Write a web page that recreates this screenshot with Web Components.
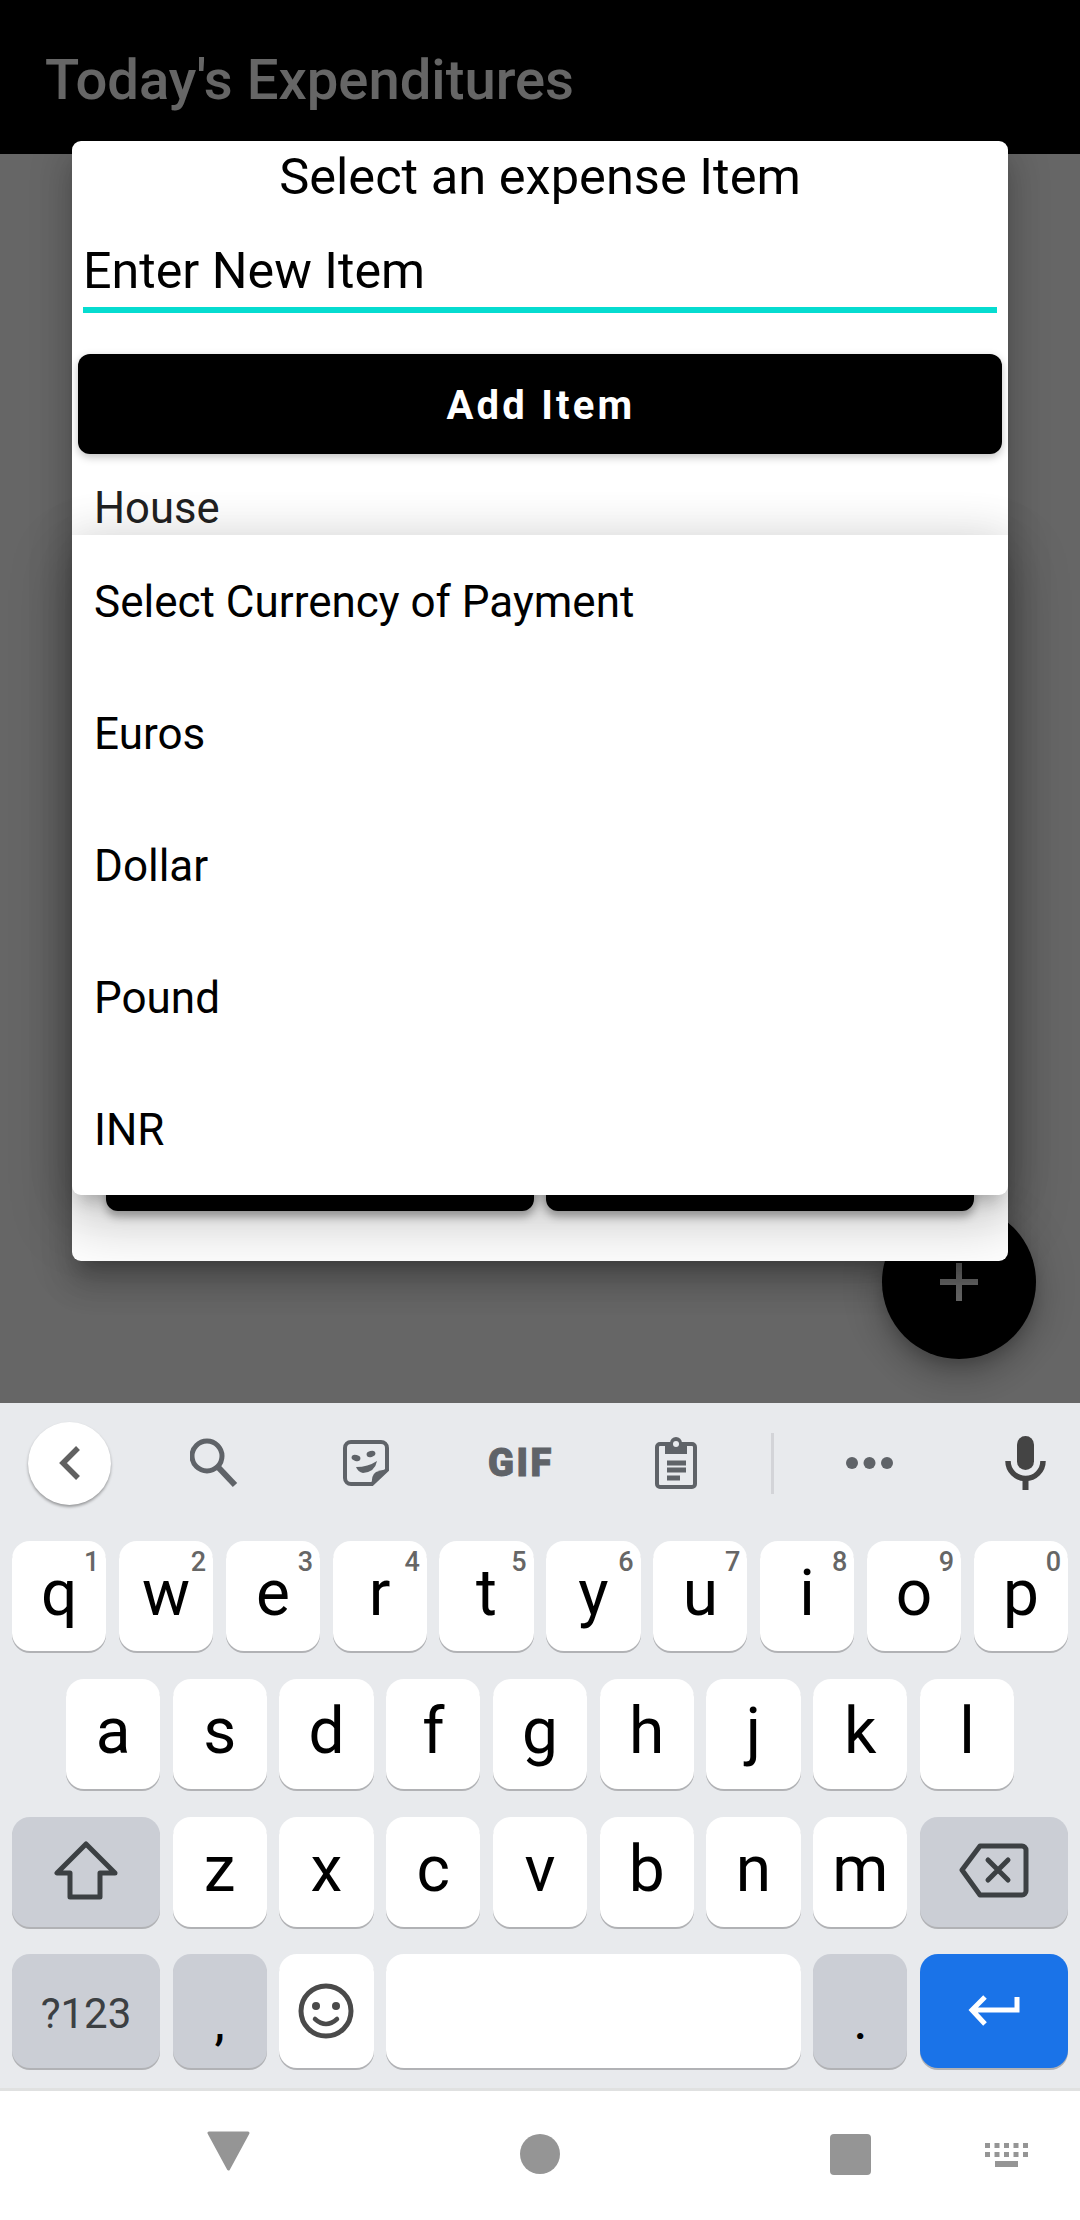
<!DOCTYPE html>
<html>
<head>
<meta charset="utf-8">
<title>Today's Expenditures</title>
<style>
  html, body { margin: 0; padding: 0; width: 1080px; height: 2220px; overflow: hidden; background: #fff; font-family: Roboto, "Liberation Sans", sans-serif; }
</style>
</head>
<body>
<phone-screen>
  <app-header>Today's Expenditures</app-header>
  <fab-button slot="fab"></fab-button>
  <expense-dialog slot="dialog" heading="Select an expense Item" placeholder="Enter New Item" action="Add Item" first="House"></expense-dialog>
  <currency-menu slot="menu">
    <menu-row>Select Currency of Payment</menu-row>
    <menu-row>Euros</menu-row>
    <menu-row>Dollar</menu-row>
    <menu-row>Pound</menu-row>
    <menu-row>INR</menu-row>
  </currency-menu>
  <soft-keyboard slot="keyboard"></soft-keyboard>
  <nav-bar slot="nav"></nav-bar>
</phone-screen>

<script>
class PhoneScreen extends HTMLElement {
  constructor() {
    super();
    this.attachShadow({ mode: 'open' });
    this.shadowRoot.innerHTML = `
      <style>
        :host { display: flex; flex-direction: column; width: 1080px; height: 2220px; }
        .stage { position: relative; height: 1403px; background: #fff; overflow: hidden; }
        .scrim { position: absolute; inset: 0; background: rgba(0,0,0,.6); }
      </style>
      <div class="stage">
        <slot></slot>
        <slot name="fab"></slot>
        <div class="scrim"></div>
        <slot name="dialog"></slot>
        <slot name="menu"></slot>
      </div>
      <slot name="keyboard"></slot>
      <slot name="nav"></slot>
    `;
  }
}

class AppHeader extends HTMLElement {
  constructor() {
    super();
    this.attachShadow({ mode: 'open' });
    this.shadowRoot.innerHTML = `
      <style>
        :host { display: flex; align-items: center; height: 154px; padding: 6px 0 0 45px; box-sizing: border-box; background: #000; color: #fff; font: 500 56.2px Roboto, sans-serif; }
      </style>
      <slot></slot>
    `;
  }
}

class FabButton extends HTMLElement {
  constructor() {
    super();
    this.attachShadow({ mode: 'open' });
    this.shadowRoot.innerHTML = `
      <style>
        :host { position: absolute; left: 882px; top: 1205px; width: 154px; height: 154px; border-radius: 50%; background: #000; display: flex; align-items: center; justify-content: center;
          box-shadow: 0 9px 15px -3px rgba(0,0,0,.2), 0 18px 30px 3px rgba(0,0,0,.14), 0 3px 54px 3px rgba(0,0,0,.12); }
      </style>
      <svg width="38" height="38" viewBox="0 0 38 38"><path d="M19 0V38M0 19H38" stroke="#fff" stroke-width="6"/></svg>
    `;
  }
}

class ExpenseDialog extends HTMLElement {
  constructor() {
    super();
    this.attachShadow({ mode: 'open' });
    this.shadowRoot.innerHTML = `
      <style>
        :host { position: absolute; left: 72px; top: 141px; width: 936px; height: 1120px; box-sizing: border-box; background: #fff; border-radius: 9px; display: flex; flex-direction: column;
          box-shadow: 0 15px 15px -9px rgba(0,0,0,.2), 0 24px 30px 3px rgba(0,0,0,.14), 0 9px 42px 6px rgba(0,0,0,.12);
          color: #000; font-family: Roboto, sans-serif; }
        h2 { margin: 0; font: 400 50.6px/72px Roboto, sans-serif; text-align: center; height: 70px; }
        .field { margin: 18px 11px 0 11px; height: 78px; border-bottom: 6px solid #06dcd0; font-size: 50.2px; line-height: 84px; }
        button { display: block; margin: 41px 6px 0 6px; height: 100px; width: 924px; border: 0; border-radius: 12px; background: #000; color: #fff; font: 700 40px Roboto, sans-serif; letter-spacing: 3.2px;
          box-shadow: 0 3px 9px rgba(0,0,0,.25); padding: 2px 0 0 2px; }
        .list { flex: 1; overflow: hidden; padding: 30px 22px 0; font-size: 43.6px; line-height: 50px; color: #212121; }
        .foot { display: flex; gap: 12px; padding: 0 34px 50px; }
        .foot button { flex: 1; margin: 0; width: auto; height: 100px; box-shadow: 0 6px 9px rgba(0,0,0,.3); }
      </style>
      <h2></h2>
      <div class="field"></div>
      <button class="add"></button>
      <div class="list"></div>
      <div class="foot"><button></button><button></button></div>
    `;
  }
  connectedCallback() {
    const root = this.shadowRoot;
    root.querySelector('h2').textContent = this.getAttribute('heading');
    root.querySelector('.field').textContent = this.getAttribute('placeholder');
    root.querySelector('.add').textContent = this.getAttribute('action');
    root.querySelector('.list').textContent = this.getAttribute('first');
  }
}

class CurrencyMenu extends HTMLElement {
  constructor() {
    super();
    this.attachShadow({ mode: 'open' });
    this.shadowRoot.innerHTML = `
      <style>
        :host { position: absolute; left: 72px; top: 535px; width: 936px; background: #fff; border-radius: 0 0 9px 9px; display: block;
          box-shadow: 0 15px 15px -9px rgba(0,0,0,.2), 0 24px 60px 6px rgba(0,0,0,.2), 0 0 48px 6px rgba(0,0,0,.07); }
      </style>
      <slot></slot>
    `;
  }
}

class MenuRow extends HTMLElement {
  constructor() {
    super();
    this.attachShadow({ mode: 'open' });
    this.shadowRoot.innerHTML = `
      <style>
        :host { display: flex; align-items: center; height: 132px; padding: 2px 0 0 22px; box-sizing: border-box; color: #000; font: 400 44px Roboto, sans-serif; }
      </style>
      <slot></slot>
    `;
  }
}

class KbKey extends HTMLElement {
  constructor() {
    super();
    this.attachShadow({ mode: 'open' });
    this.shadowRoot.innerHTML = `
      <style>
        :host { display: flex; position: relative; align-items: center; justify-content: center; flex: 1 1 0; min-width: 0; height: 110px; border-radius: 18px; background: #fff; color: #000;
          box-shadow: 0 2px 0 #b1b2b5; font: 400 64px/105px Roboto, sans-serif; padding-bottom: 5px; box-sizing: border-box; }
        :host([fn]) { background: #cbced5; }
        :host([wide]) { flex: 0 0 148px; }
        :host([fixed]) { flex: 0 0 94.2px; }
        :host([tall]) { height: 114px; padding-bottom: 0; }
        :host([blue]) { background: #1a73e8; }
        .hint { position: absolute; top: 5px; right: 7px; font-size: 27px; font-weight: 500; line-height: 32px; color: #666; }
      </style>
      <slot></slot><span class="hint"></span>
    `;
  }
  connectedCallback() {
    this.shadowRoot.querySelector('.hint').textContent = this.getAttribute('hint') || '';
  }
}

class SoftKeyboard extends HTMLElement {
  constructor() {
    super();
    this.attachShadow({ mode: 'open' });
    const letters = (str, hints) => str.split('').map((c, i) => `<kb-key ${hints ? `hint="${hints[i]}"` : ''}>${c}</kb-key>`).join('');
    this.shadowRoot.innerHTML = `
      <style>
        :host { display: block; height: 688px; box-sizing: border-box; background: #e8eaed; border-bottom: 3px solid #e0e1e1; }
        .tools { display: flex; align-items: center; height: 138px; color: #5f6368; padding-bottom: 18px; box-sizing: border-box; }
        .tools > * { flex: none; }
        .back { width: 83px; height: 83px; margin-left: 28px; border-radius: 50%; background: #fff; box-shadow: 0 2px 3px rgba(0,0,0,.35); display: flex; align-items: center; justify-content: center; }
        .gif { font: 900 38px/40px Roboto, sans-serif; letter-spacing: 2.5px; -webkit-text-stroke: 1px #5f6368; width: 64px; margin-left: 99px; text-align: center; white-space: nowrap; }
        .rule { width: 3px; height: 61px; margin-left: 74px; background: #d3d4d8; }
        .row { display: flex; gap: 12.6px; padding: 0 12px; margin-bottom: 28px; }
        .row.mid { padding: 0 66px; margin-bottom: 28px; }
        .row.third { margin-bottom: 27px; }
        .comma { font-size: 46px; font-weight: 500; padding: 0; align-items: flex-end; line-height: 90px; }
        .sym { font-size: 42px; color: #3c4043; padding: 4px 0 0; }
      </style>
      <div class="tools">
        <div class="back"><svg width="24" height="36" viewBox="0 0 24 36"><path d="M20 3L5 18L20 33" fill="none" stroke="#616161" stroke-width="5.500"/></svg></div>
        <svg style="margin-left:79px" width="48" height="52" viewBox="0 0 48 52"><circle cx="17" cy="19" r="15" fill="none" stroke="#5f6368" stroke-width="5"/><path d="M28 30L45 48" stroke="#5f6368" stroke-width="6"/></svg>
        <svg style="margin-left:105px" width="46" height="46" viewBox="0 0 46 46"><path d="M8 2H38a6 6 0 0 1 6 6V30L29 44H8a6 6 0 0 1-6-6V8a6 6 0 0 1 6-6Z" fill="none" stroke="#5f6368" stroke-width="4"/><path d="M45 29L29 45Q28 35 33 32Q38 30 45 29Z" fill="#5f6368"/><ellipse cx="13" cy="18" rx="4.5" ry="3" transform="rotate(15 13 18)" fill="#5f6368"/><ellipse cx="28" cy="14" rx="4.5" ry="3" transform="rotate(-15 28 14)" fill="#5f6368"/><path d="M13 27Q25 27 34 21Q32 32 20 33Q15 32 13 27Z" fill="#5f6368"/></svg>
        <div class="gif">GIF</div>
        <svg style="margin-left:103px" width="42" height="52" viewBox="0 0 42 52"><rect x="2" y="7" width="38" height="43" rx="3" fill="none" stroke="#5f6368" stroke-width="4"/><path d="M10 6H15a6 6 0 0 1 12 0H32V17H10Z" fill="#5f6368"/><circle cx="21" cy="7" r="3" fill="#e8eaed"/><path d="M12 26H31M12 33H31" stroke="#5f6368" stroke-width="5"/><path d="M12 41H25" stroke="#5f6368" stroke-width="5"/></svg>
        <div class="rule"></div>
        <svg style="margin-left:72px" width="47" height="12" viewBox="0 0 47 12"><circle cx="6" cy="6" r="6" fill="#5f6368"/><circle cx="23.5" cy="6" r="6" fill="#5f6368"/><circle cx="41" cy="6" r="6" fill="#5f6368"/></svg>
        <svg style="margin-left:112px" width="41" height="54" viewBox="0 0 41 54"><rect x="12" y="0" width="17" height="34" rx="8.5" fill="#444"/><path d="M3 25a17.5 17.5 0 0 0 35 0" fill="none" stroke="#444" stroke-width="5.5"/><rect x="17.5" y="40" width="6" height="14" fill="#444"/></svg>
      </div>
      <div class="row">${letters('qwertyuiop', '1234567890')}</div>
      <div class="row mid">${letters('asdfghjkl')}</div>
      <div class="row third">
        <kb-key fn wide>
          <svg width="64" height="62" viewBox="0 0 64 62"><path d="M32 5L3 34H16V58H46V34H61Z" fill="none" stroke="#3c4043" stroke-width="5" stroke-linejoin="round"/></svg>
        </kb-key>
        ${letters('zxcvbnm')}
        <kb-key fn wide>
          <svg width="72" height="56" viewBox="0 0 72 56"><path d="M4 28L22 4H64a4 4 0 0 1 4 4V49a4 4 0 0 1-4 4H22Z" fill="none" stroke="#3c4043" stroke-width="5" stroke-linejoin="round"/><path d="M30 18L50 38M50 18L30 38" stroke="#3c4043" stroke-width="5" stroke-linecap="round"/></svg>
        </kb-key>
      </div>
      <div class="row">
        <kb-key fn wide tall class="sym">?123</kb-key>
        <kb-key fn fixed tall class="comma">,</kb-key>
        <kb-key fixed tall>
          <svg width="56" height="56" viewBox="0 0 56 56"><circle cx="28" cy="28" r="25" fill="none" stroke="#4a4a4a" stroke-width="5"/><circle cx="18" cy="23" r="4" fill="#4a4a4a"/><circle cx="38" cy="23" r="4" fill="#4a4a4a"/><path d="M17 36Q28 46 39 36" fill="none" stroke="#4a4a4a" stroke-width="4.5" stroke-linecap="round"/></svg>
        </kb-key>
        <kb-key tall></kb-key>
        <kb-key fn fixed tall class="comma">.</kb-key>
        <kb-key wide tall blue>
          <svg width="64" height="44" viewBox="0 0 64 44"><path d="M23 8L10 21L23 35M10 21H55V8" fill="none" stroke="#fff" stroke-width="5"/></svg>
        </kb-key>
      </div>
    `;
  }
}

class NavBar extends HTMLElement {
  constructor() {
    super();
    this.attachShadow({ mode: 'open' });
    this.shadowRoot.innerHTML = `
      <style>
        :host { display: flex; height: 129px; background: #fff; align-items: flex-start; box-sizing: border-box; padding-top: 40px; }
        svg { flex: none; display: block; }
      </style>
      <svg style="margin-left:206px" width="45" height="40" viewBox="0 0 45 40"><path d="M3 2H42L22.5 38Z" fill="#959595" stroke="#959595" stroke-width="3" stroke-linejoin="round"/></svg>
      <svg style="margin-left:269px;margin-top:3px" width="40" height="40" viewBox="0 0 40 40"><circle cx="20" cy="20" r="20" fill="#959595"/></svg>
      <svg style="margin-left:270px;margin-top:3px" width="41" height="41" viewBox="0 0 41 41"><rect width="41" height="41" rx="4" fill="#959595"/></svg>
      <svg style="margin-left:114px;margin-top:12px" width="43" height="24" viewBox="0 0 43 24"><path d="M0 0h5v5H0zM9.500 0h5v5h-5zM19 0h5v5h-5zM28.500 0h5v5h-5zM38 0h5v5h-5zM0 9h5v5H0zM9.500 9h5v5h-5zM19 9h5v5h-5zM28.500 9h5v5h-5zM38 9h5v5h-5zM10 18h23v6H10z" fill="#959595"/></svg>
    `;
  }
}

customElements.define('phone-screen', PhoneScreen);
customElements.define('app-header', AppHeader);
customElements.define('fab-button', FabButton);
customElements.define('expense-dialog', ExpenseDialog);
customElements.define('currency-menu', CurrencyMenu);
customElements.define('menu-row', MenuRow);
customElements.define('kb-key', KbKey);
customElements.define('soft-keyboard', SoftKeyboard);
customElements.define('nav-bar', NavBar);
</script>
</body>
</html>
